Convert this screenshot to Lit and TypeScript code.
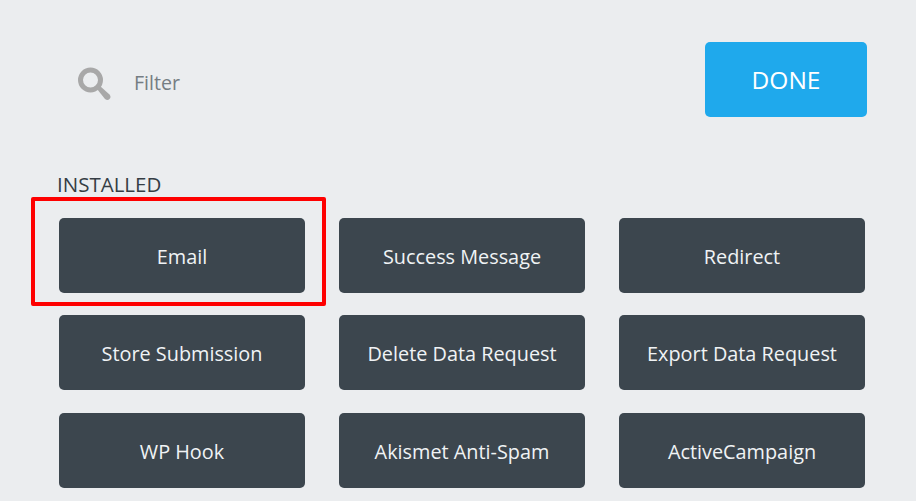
import { LitElement, html, css } from "lit";
import { customElement } from "lit/decorators.js";

const ITEMS = [
  "Email", "Success Message", "Redirect",
  "Store Submission", "Delete Data Request", "Export Data Request",
  "WP Hook", "Akismet Anti-Spam", "ActiveCampaign",
];

@customElement("app-root")
export class AppRoot extends LitElement {
  static styles = css`
    :host {
      display: block;
      width: 916px;
      height: 501px;
      overflow: hidden;
      background: #ebedef;
      font-family: "Open Sans", sans-serif;
      position: relative;
    }
    .page { padding: 42px 49px 0 57px; }
    .top {
      display: flex;
      justify-content: space-between;
      align-items: center;
      height: 75px;
    }
    .filter { display: flex; align-items: center; padding-left: 20px; }
    .filter svg { display: block; width: 36px; height: 42px; margin-right: 21px; }
    .filter span { font-size: 19.6px; color: #757d83; line-height: 27px; margin-top: 6px; }
    .done {
      width: 162px;
      height: 75px;
      background: #1fa9ec;
      color: #fff;
      border-radius: 5px;
      font-size: 24.5px;
      display: flex;
      align-items: center;
      justify-content: center;
    }
    h2 {
      margin: 54px 0 0;
      font-size: 20.5px;
      font-weight: 500;
      line-height: 26px;
      color: #353d44;
    }
    .grid {
      margin: 21px 0 0 2px;
      display: grid;
      grid-template-columns: repeat(3, 246px);
      column-gap: 34px;
      row-gap: 22.4px;
    }
    .btn {
      height: 75px;
      box-sizing: border-box;
      padding-top: 2px;
      background: #3c464e;
      color: #f0f3f5;
      border-radius: 5px;
      font-size: 19.85px;
      display: flex;
      align-items: center;
      justify-content: center;
    }
    .mark {
      position: absolute;
      left: 31px;
      top: 197px;
      width: 295px;
      height: 109px;
      box-sizing: border-box;
      border: 4px solid #fe0000;
      border-radius: 2px;
    }
  `;

  render() {
    return html`
      <div class="page">
        <div class="top">
          <div class="filter">
            <svg viewBox="0 0 36 42" aria-hidden="true">
              <circle cx="13.5" cy="21" r="10" fill="none" stroke="#a8a8a8" stroke-width="5"></circle>
              <path d="M20 30 L23 27 L32.5 35.5 Q34.5 38 32.5 40 Q30.5 42 28 40 Z" fill="#a8a8a8"></path>
            </svg>
            <span>Filter</span>
          </div>
          <div class="done">DONE</div>
        </div>
        <h2>INSTALLED</h2>
        <div class="grid">
          ${ITEMS.map((t) => html`<div class="btn">${t}</div>`)}
        </div>
      </div>
      <div class="mark"></div>
    `;
  }
}
